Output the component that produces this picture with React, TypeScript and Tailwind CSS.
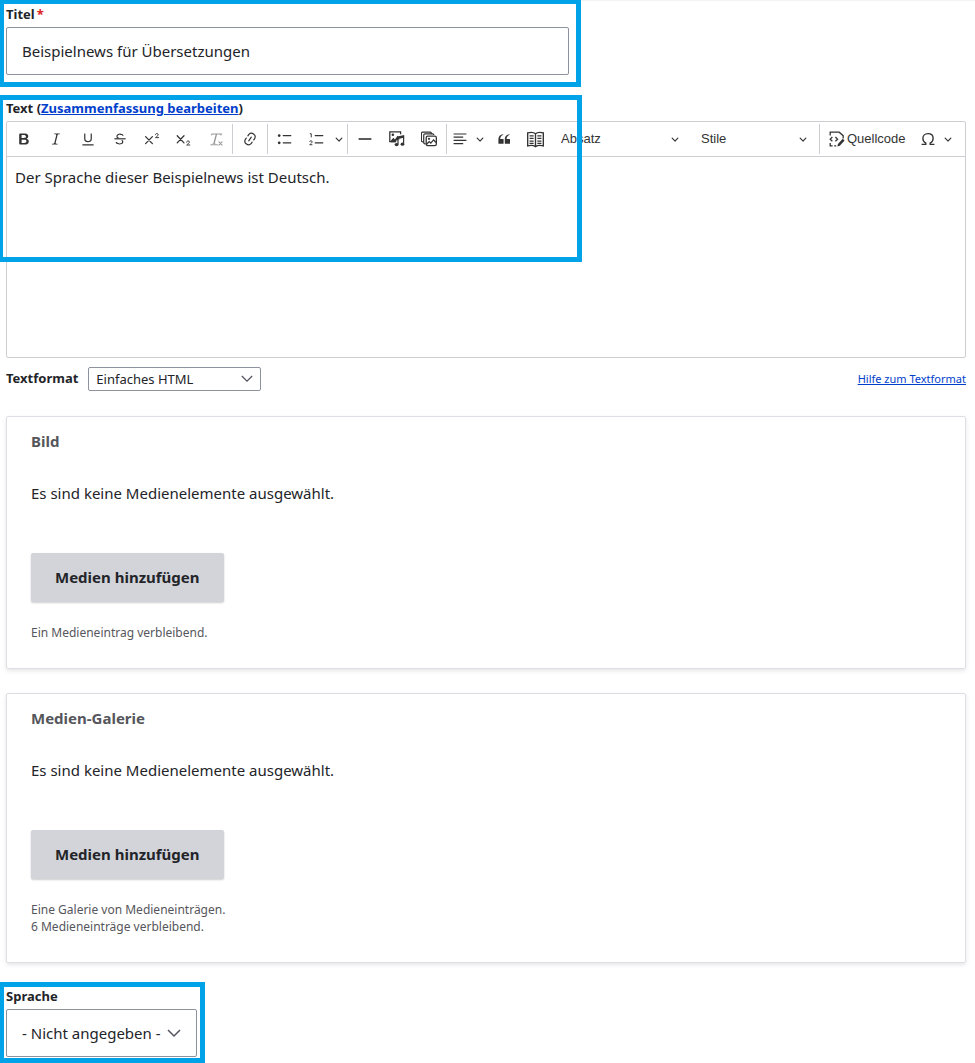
import React from "react";

type IconProps = { children: React.ReactNode; className?: string };

function Icon({ children, className = "" }: IconProps) {
  return (
    <svg viewBox="0 0 20 20" className={`size-4 shrink-0 ${className}`} fill="currentColor" aria-hidden="true">
      {children}
    </svg>
  );
}

function Arrow() {
  return (
    <svg viewBox="0 0 10 10" className="size-2 shrink-0" fill="currentColor" aria-hidden="true">
      <path d="M.941 4.523a.75.75 0 1 1 1.06-1.06l3.006 3.005 3.005-3.005a.75.75 0 1 1 1.06 1.06l-3.549 3.55a.75.75 0 0 1-1.168-.136L.941 4.523z" />
    </svg>
  );
}

function Tool({ label, className = "w-8", children }: { label: string; className?: string; children: React.ReactNode }) {
  return (
    <button type="button" aria-label={label} className={`flex h-8 shrink-0 items-center justify-center ${className}`}>
      {children}
    </button>
  );
}

function Separator() {
  return <span className="mr-px h-[30px] w-px shrink-0 bg-[#ccced1]" />;
}

function ToolSelect({ label, className }: { label: string; className: string }) {
  return (
    <div className={`flex h-8 min-w-0 items-center ${className}`}>
      <select
        aria-label={label}
        className="-mr-5 h-8 w-full min-w-0 appearance-none bg-transparent pl-[10px] pr-5 font-['Liberation_Sans',Arial,sans-serif] text-[13px] text-[#333]"
      >
        <option>{label}</option>
      </select>
      <span className="pointer-events-none mr-[10px] flex">
        <Arrow />
      </span>
    </div>
  );
}

function Toolbar() {
  return (
    <div className="flex h-[35px] items-center overflow-hidden border-b border-[#ccced1] pl-px text-[#333]">
      <Tool label="Fett">
        <Icon>
          <path d="M10.187 17H5.773c-.637 0-1.092-.138-1.364-.415-.273-.277-.409-.718-.409-1.323V4.738c0-.617.14-1.062.419-1.332.279-.27.73-.406 1.354-.406h4.68c.69 0 1.288.041 1.793.124.506.083.96.242 1.36.478.341.197.644.447.906.75a3.262 3.262 0 0 1 .808 2.162c0 1.401-.722 2.426-2.167 3.075C15.05 10.175 16 11.315 16 13.01a3.756 3.756 0 0 1-2.296 3.504 6.1 6.1 0 0 1-1.517.377c-.571.073-1.238.11-2 .11zm-.217-6.217H7v4.087h3.069c1.977 0 2.965-.69 2.965-2.072 0-.707-.256-1.22-.768-1.537-.512-.319-1.277-.478-2.296-.478zM7 5.13v3.619h2.606c.729 0 1.292-.067 1.69-.2a1.6 1.6 0 0 0 .91-.765c.165-.267.247-.566.247-.897 0-.707-.26-1.176-.778-1.409-.519-.232-1.31-.348-2.375-.348H7z" />
        </Icon>
      </Tool>
      <Tool label="Kursiv">
        <Icon>
          <path d="m9.586 14.633.021.004c-.036.335.095.655.393.962.082.083.173.15.274.201h1.474a.6.6 0 1 1 0 1.2H5.304a.6.6 0 0 1 0-1.2h1.15c.474-.07.809-.182 1.005-.334.157-.122.291-.32.404-.597l2.416-9.55a1.053 1.053 0 0 0-.281-.823 1.12 1.12 0 0 0-.442-.296H8.15a.6.6 0 0 1 0-1.2h6.443a.6.6 0 1 1 0 1.2h-1.195c-.376.056-.65.155-.823.296-.215.175-.423.439-.623.79l-2.366 9.347z" />
        </Icon>
      </Tool>
      <Tool label="Unterstrichen">
        <Icon>
          <path d="M3 18v-1.5h14V18zm2.2-8V3.6c0-.4.4-.6.8-.6.3 0 .7.2.7.6v6.2c0 2 1.3 2.8 3.2 2.8 1.9 0 3.4-.9 3.4-2.9V3.6c0-.3.4-.5.8-.5.3 0 .7.2.7.5V10c0 2.7-2.2 4-4.9 4-2.6 0-4.7-1.2-4.7-4z" />
        </Icon>
      </Tool>
      <Tool label="Durchgestrichen">
        <Icon>
          <path d="M7 16.4c-.8-.4-1.5-.9-2.2-1.5a.6.6 0 0 1-.2-.5l.3-.6h1c1 1.2 2.1 1.7 3.7 1.7 1 0 1.8-.3 2.3-.6.6-.4.6-1.2.6-1.3.2-1.2-.9-2.1-.9-2.1h2.1c.3.7.4 1.2.4 1.7v.8l-.6 1.2c-.6.8-1.1 1-1.6 1.2a6 6 0 0 1-2.4.6c-1 0-1.8-.3-2.5-.6zM6.8 9 6 8.3c-.4-.5-.5-.8-.5-1.6 0-.7.1-1.3.5-1.8.4-.6 1-1 1.6-1.3a6.3 6.3 0 0 1 4.7 0 4 4 0 0 1 1.7 1l.3.7c0 .1.2.4-.2.7-.4.2-.9.1-1 0a3 3 0 0 0-1.2-1c-.4-.2-1-.3-2-.4-.7 0-1.4.2-2 .6-.8.6-1 .8-1 1.5 0 .8.5 1 1.2 1.5.6.4 1.1.7 1.9 1z" />
          <path d="M3 10.5V9h14v1.5z" />
        </Icon>
      </Tool>
      <Tool label="Hochgestellt">
        <Icon>
          <path d="m2 7 8.500 8.800m0-8.800-8.500 8.800" fill="none" stroke="currentColor" strokeWidth="1.600" strokeLinecap="round" />
          <path d="M14.300 4.700c.1-1 .8-1.500 1.800-1.500 1.100 0 1.700.6 1.700 1.500 0 1.200-2 2-3.400 3.600h3.900" fill="none" stroke="currentColor" strokeWidth="1.200" strokeLinecap="round" strokeLinejoin="round" />
        </Icon>
      </Tool>
      <Tool label="Tiefgestellt">
        <Icon>
          <path d="m1.500 6 8.500 8.800m0-8.800-8.500 8.800" fill="none" stroke="currentColor" strokeWidth="1.600" strokeLinecap="round" />
          <path d="M13.300 13.900c.1-1 .8-1.500 1.800-1.500 1.100 0 1.700.6 1.700 1.500 0 1.200-2 2-3.400 3.600h3.900" fill="none" stroke="currentColor" strokeWidth="1.200" strokeLinecap="round" strokeLinejoin="round" />
        </Icon>
      </Tool>
      <Tool label="Formatierung entfernen" className="w-8 opacity-50">
        <Icon>
          <path d="M8.690 14.915c.053.052.173.083.360.093a.366.366 0 0 1 .345.485l-.003.010a.738.738 0 0 1-.697.497h-2.670a.374.374 0 0 1-.353-.496l.013-.038a.681.681 0 0 1 .644-.458c.197-.012.325-.043.386-.093a.280.280 0 0 0 .072-.110L9.592 4.500H6.269c-.359-.017-.609.013-.750.090-.142.078-.289.265-.442.563-.192.290-.516.464-.864.464H4.170a.430.430 0 0 1-.407-.569L4.460 3h13.080l-.620 2.043a.810.810 0 0 1-.775.574h-.114a.486.486 0 0 1-.486-.486c.001-.284-.054-.464-.167-.540-.112-.076-.367-.106-.766-.091h-3.280l-2.680 10.257c-.006.074.007.127.038.158z" />
          <path d="M3.500 17.200h8.300M13.600 13.600l4 4m0-4-4 4" fill="none" stroke="currentColor" strokeWidth="1.300" strokeLinecap="round" />
        </Icon>
      </Tool>
      <Separator />
      <Tool label="Link">
        <Icon>
          <path d="m11.077 15 .991-1.416a.75.75 0 1 1 1.229.86l-1.148 1.64a.748.748 0 0 1-.217.206 5.251 5.251 0 0 1-8.503-5.955.741.741 0 0 1 .12-.274l1.147-1.639a.75.75 0 1 1 1.228.86L4.933 10.7l.006.003a3.75 3.75 0 0 0 6.132 4.294l.006.004zm5.494-5.335a.748.748 0 0 1-.12.274l-1.147 1.639a.75.75 0 1 1-1.228-.86l.86-1.23a3.75 3.75 0 0 0-6.144-4.301l-.86 1.229a.75.75 0 0 1-1.229-.86l1.148-1.64a.748.748 0 0 1 .217-.206 5.251 5.251 0 0 1 8.503 5.955zm-4.563-2.532a.75.75 0 0 1 .184 1.045l-3.155 4.505a.75.75 0 1 1-1.229-.86l3.155-4.506a.75.75 0 0 1 1.045-.184z" />
        </Icon>
      </Tool>
      <span className="w-px" />
      <Separator />
      <Tool label="Aufzählungsliste">
        <Icon>
          <path d="M7 5.750c0 .414.336.75.75.75h9.500a.75.75 0 1 0 0-1.500h-9.500a.75.75 0 0 0-.75.75zm-6 0C1 4.784 1.777 4 2.750 4c.966 0 1.750.777 1.750 1.750 0 .966-.777 1.750-1.750 1.750C1.784 7.500 1 6.723 1 5.750zm6 9c0 .414.336.75.75.75h9.500a.75.75 0 1 0 0-1.500h-9.500a.75.75 0 0 0-.75.75zm-6 0c0-.966.777-1.750 1.750-1.750.966 0 1.750.777 1.750 1.750 0 .966-.777 1.750-1.750 1.750-.966 0-1.750-.777-1.750-1.750z" />
        </Icon>
      </Tool>
      <Tool label="Nummerierte Liste">
        <Icon>
          <path d="M7 5.750c0 .414.336.75.75.75h9.500a.75.75 0 1 0 0-1.500h-9.500a.75.75 0 0 0-.75.75zM7 14.750a.75.75 0 0 1 .75-.75h9.500a.75.75 0 1 1 0 1.500h-9.500a.75.75 0 0 1-.75-.75z" />
          <path d="M1 3.400h1.800V8M.8 13.400c.2-.9.800-1.200 1.600-1.200.9 0 1.500.5 1.500 1.300 0 1.200-1.700 2-2.900 3.700h3.200" fill="none" stroke="currentColor" strokeWidth="1.200" />
        </Icon>
      </Tool>
      <Tool label="Listenoptionen" className="w-3">
        <Arrow />
      </Tool>
      <span className="w-0.5" />
      <Separator />
      <Tool label="Horizontale Linie">
        <Icon>
          <path d="M2 9h16v2H2z" />
        </Icon>
      </Tool>
      <Tool label="Medien einfügen">
        <Icon>
          <path d="M8 13.200H1V1.200h13.500V4" fill="none" stroke="currentColor" strokeWidth="1.600" />
          <circle cx="4.800" cy="4.800" r="1.600" />
          <path d="m2 12.500 3.400-4 2 2 3.300-4.700 2.300 2.700v2l-4 1.500v2H2zM10.500 7l8.500-2v3.200l-7 1.700v6.300h-1.500z" />
          <path d="M17.500 7H19v9h-1.500z" />
          <ellipse cx="9.500" cy="17" rx="2.500" ry="2" />
          <ellipse cx="16.800" cy="16.500" rx="2.300" ry="2" />
        </Icon>
      </Tool>
      <Tool label="Mediengalerie einfügen">
        <Icon>
          <path d="M3.200 13.500H2c-1 0-1.500-.5-1.500-1.500V3c0-1 .5-1.500 1.500-1.500h9.500c1 0 1.500.5 1.500 1.300M5.800 16H5c-1 0-1.600-.6-1.600-1.600V5.300c0-1 .6-1.600 1.600-1.600h9.500c1 0 1.500.5 1.500 1.400" fill="none" stroke="currentColor" strokeWidth="1.500" />
          <rect x="6.500" y="6.300" width="12.700" height="12" rx="2" fill="none" stroke="currentColor" strokeWidth="1.600" />
          <circle cx="10" cy="9.800" r="1.400" />
          <path d="m7 16.500 3.200-3.200 2 1.800 3.500-4 3 3.300" fill="none" stroke="currentColor" strokeWidth="1.600" />
        </Icon>
      </Tool>
      <span className="w-px" />
      <Separator />
      <Tool label="Ausrichtung" className="w-6">
        <Icon>
          <path d="M2 3h16v1.500H2zm0 4h12v1.500H2zm0 4h16v1.500H2zm0 4h12v1.500H2z" />
        </Icon>
      </Tool>
      <Tool label="Ausrichtungsoptionen" className="w-4">
        <Arrow />
      </Tool>
      <Tool label="Zitat" className="w-[31px]">
        <Icon>
          <path d="M3 10.423a6.500 6.500 0 0 1 6.056-6.408l.038.670C6.448 5.423 5.354 7.663 5.220 10H9c.552 0 .5.432.5.986v4.511c0 .554-.448.503-1 .503h-5c-.552 0-.5-.449-.5-1.003v-4.574zm8 0a6.500 6.500 0 0 1 6.056-6.408l.038.670c-2.646.739-3.740 2.979-3.873 5.315H17c.552 0 .5.432.5.986v4.511c0 .554-.448.503-1 .503h-5c-.552 0-.5-.449-.5-1.003v-4.574z" />
        </Icon>
      </Tool>
      <Tool label="Glossar">
        <Icon className="size-[17px]">
          <path d="M10 3.200C8 1.500 4 1.300.8 2.200v15.300c3.400-.8 7.200-.5 9.200 1 2-1.500 5.800-1.800 9.200-1V2.200C16 1.300 12 1.500 10 3.200zm0 0v15" fill="none" stroke="currentColor" strokeWidth="1.600" />
          <path d="M3 5.800h4.800M3 8.800h4.800M3 11.800h4.800M3 14.600h4.800M12.200 5.800H17M12.200 8.800H17M12.200 11.800H17M12.200 14.600H17" stroke="currentColor" strokeWidth="1.500" />
        </Icon>
      </Tool>
      <ToolSelect label="Absatz" className="w-[140px]" />
      <ToolSelect label="Stile" className="w-[128px]" />
      <Separator />
      <button
        type="button"
        className="flex h-8 shrink-0 items-center gap-0.5 pl-2 font-['Liberation_Sans',Arial,sans-serif] text-[13px]"
      >
        <Icon>
          <path d="M1.500 5.500V1.500h11.200l5 4.300v3.700M1.500 15v3.500h3M6.500 18.500h2.500" fill="none" stroke="currentColor" strokeWidth="1.600" />
          <path d="M4.200 7.500 1.500 10.200l2.700 2.700M8 7.500l2.700 2.700L8 12.900" fill="none" stroke="currentColor" strokeWidth="1.600" />
          <path d="m17.200 9.800 2.300 2.200-6 6.500-3 1 .7-3.200z" />
        </Icon>
        <span>Quellcode</span>
      </button>
      <Tool label="Sonderzeichen" className="ml-1.5 w-8">
        <Icon>
          <path d="M2 16.700h5.300v-1.500C4.900 13.800 3.600 12 3.600 9.300c0-3.500 2.600-6 6.400-6s6.400 2.500 6.400 6c0 2.700-1.300 4.500-3.700 5.900v1.500H18" fill="none" stroke="currentColor" strokeWidth="1.700" />
        </Icon>
      </Tool>
      <Tool label="Sonderzeichenoptionen" className="w-2">
        <Arrow />
      </Tool>
    </div>
  );
}

function Caret({ className }: { className: string }) {
  return (
    <svg viewBox="0 0 14 9" className={`pointer-events-none shrink-0 ${className}`} fill="none" aria-hidden="true">
      <path d="m1 1 6 6 6-6" stroke="#545560" strokeWidth="1.500" />
    </svg>
  );
}

function MediaCard({ title, children }: { title: string; children: React.ReactNode }) {
  return (
    <fieldset className="mb-6 rounded-[2px] border border-[#dedfe4] px-6 pb-[27px] pt-3 shadow-[0_2px_4px_rgba(0,0,0,0.1)]">
      <legend className="float-left w-full text-[15px] font-bold leading-6 text-[#55565b]">{title}</legend>
      <p className="clear-both pt-7 text-[15px] leading-6">Es sind keine Medienelemente ausgewählt.</p>
      <button type="button" className="mt-12 block h-[49px] rounded-[2px] bg-[#d3d4d9] px-6 text-[15px] font-bold shadow-[0_1px_2px_rgba(0,0,0,0.2)]">
        Medien hinzufügen
      </button>
      <div className="mt-[22px] text-[12px] leading-[17px] text-[#55565b]">{children}</div>
    </fieldset>
  );
}

export default function App() {
  return (
    <main className="bg-white font-['Noto_Sans','Segoe_UI',sans-serif] text-[#232429] shadow-[inset_0_1px_0_#f3f3f3]">
      <div className="max-w-[581px] border-[5px] border-l-4 border-t-4 border-[#00a2e8] pb-[7px] pl-0.5 pr-[7px]">
        <label htmlFor="titel" className="block h-[23px] text-[13px] font-bold leading-5">
          Titel<span className="ml-0.5 text-[#dc2323]">*</span>
        </label>
        <input
          id="titel"
          defaultValue="Beispielnews für Übersetzungen"
          className="block h-12 w-full rounded-[2px] border border-[#8e929c] px-[15px] text-[15px]"
        />
      </div>

      <div className="relative pl-1.5 pr-[9px] pt-[11px]">
        <div className="pointer-events-none absolute left-0 top-2 h-[167px] w-[582px] max-w-full border-[5px] border-l-[3px] border-[#00a2e8]" />
        <div className="h-[23px] text-[13px] font-bold leading-5">
          Text (
          <a href="#zusammenfassung" className="text-[#003ecc] underline">
            Zusammenfassung bearbeiten
          </a>
          )
        </div>
        <div className="rounded-[2px] border border-[#ccced1]">
          <Toolbar />
          <textarea
            aria-label="Text"
            defaultValue="Der Sprache dieser Beispielnews ist Deutsch."
            className="block h-[200px] w-full resize-none px-2 pt-2 text-[15px] leading-6"
          />
        </div>
        <div className="mt-[9px] flex items-center">
          <label htmlFor="textformat" className="text-[13px] font-bold">
            Textformat
          </label>
          <div className="ml-2.5 flex items-center">
            <select
              id="textformat"
              className="h-6 w-[173px] appearance-none rounded-[2px] border border-[#8e929c] bg-white px-[7px] text-[13px] leading-5"
            >
              <option>Einfaches HTML</option>
            </select>
            <Caret className="-ml-5 h-2 w-3" />
          </div>
          <a href="#hilfe" className="ml-auto text-[11px] text-[#003ecc] underline">
            Hilfe zum Textformat
          </a>
        </div>
      </div>

      <div className="pl-1.5 pr-[9px] pt-[25px]">
        <MediaCard title="Bild">Ein Medieneintrag verbleibend.</MediaCard>
        <MediaCard title="Medien-Galerie">
          Eine Galerie von Medieneinträgen.
          <br />6 Medieneinträge verbleibend.
        </MediaCard>
      </div>

      <div className="-mt-[5px] w-[205px] border-[5px] border-l-4 border-[#00a2e8] pb-px pl-0.5 pr-[3px]">
        <label htmlFor="sprache" className="block h-[22px] text-[13px] font-bold leading-[18px]">
          Sprache
        </label>
        <div className="flex items-center">
          <select
            id="sprache"
            className="h-12 w-full appearance-none rounded-[2px] border border-[#8e929c] bg-white px-[15px] text-[15px]"
          >
            <option>- Nicht angegeben -</option>
          </select>
          <Caret className="-ml-[30px] mr-4 h-[9px] w-3.5" />
        </div>
      </div>
    </main>
  );
}
